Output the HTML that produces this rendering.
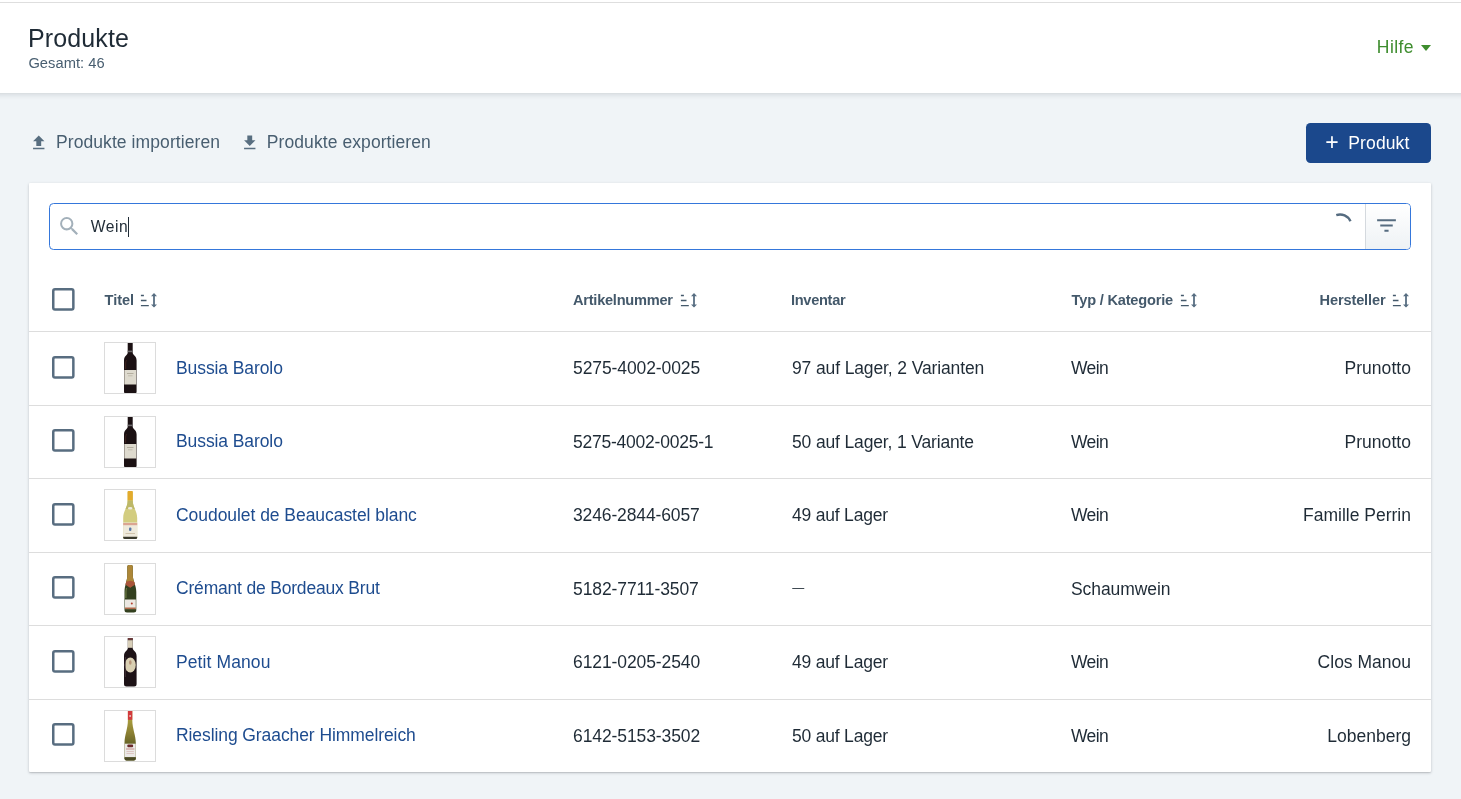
<!DOCTYPE html>
<html lang="de">
<head>
<meta charset="utf-8">
<title>Produkte</title>
<style>
*{box-sizing:border-box;margin:0;padding:0}
html,body{width:1461px;height:799px;overflow:hidden}
body{background:#f0f4f7;font-family:"Liberation Sans",Arial,sans-serif;color:#1f2b36;position:relative}
#wrap{position:absolute;left:0;top:0;width:1461px;height:799px;will-change:transform}
.abs{position:absolute;white-space:nowrap}
.topbar{position:absolute;left:-20px;top:0;width:1501px;height:93px;background:#fff;box-shadow:0 1px 6px rgba(20,30,40,.17)}
.topline{position:absolute;left:0;top:2px;width:1461px;height:1px;background:#dedede}
h1{position:absolute;left:28px;top:23px;font-size:25px;line-height:30px;font-weight:400;color:#1f2b36;white-space:nowrap;letter-spacing:.12px}
.total{position:absolute;left:28.400px;top:55px;font-size:14.700px;line-height:17px;color:#485e70;white-space:nowrap;letter-spacing:.05px}
.help{position:absolute;left:1376.800px;top:37px;font-size:17.5px;line-height:20px;color:#3e8d2e;white-space:nowrap;letter-spacing:.45px}
.caret{position:absolute;left:1421px;top:45px;width:0;height:0;border-left:5px solid transparent;border-right:5px solid transparent;border-top:6px solid #3e8d2e}
.tool{position:absolute;top:132px;font-size:17.5px;line-height:20px;color:#485e70;white-space:nowrap;letter-spacing:.08px}
.btn{position:absolute;left:1306px;top:123px;width:125px;height:40px;border-radius:4.500px;background:#1b488c;color:#fff;font-size:17.5px;line-height:40px;white-space:nowrap}
.card{position:absolute;left:29px;top:183px;width:1402px;height:589px;background:#fff;border-radius:1px;box-shadow:0 1px 3px rgba(10,20,30,.22),0 1px 1px rgba(10,20,30,.08)}
.search{position:absolute;left:20px;top:20px;width:1362px;height:47px;border:1px solid #3577db;border-radius:4.500px;background:#fff;overflow:hidden}
.search .q{position:absolute;left:40.700px;top:13px;font-size:15.600px;line-height:20px;color:#1f2b36;letter-spacing:.55px}
.search .cur{position:absolute;left:78px;top:13px;width:1px;height:20px;background:#1f2b36}
.search .fbtn{position:absolute;right:0;top:0;width:45px;height:45px;border-left:1px solid #d4d9de;background:linear-gradient(#fff,#eef2f5)}
.th{position:absolute;top:107px;font-size:14.6px;line-height:20px;font-weight:700;color:#44596b;white-space:nowrap}
.si{position:absolute;top:109px}
.row{position:absolute;left:0;width:1402px;height:74px;border-top:1px solid #dddddd}
.cb{position:absolute;left:23.300px;top:24.200px}
.ev .cb{top:23.400px}
.thumb{position:absolute;left:75px;top:10px;width:52px;height:52px;border:1px solid #dcdcdc;background:#fff}
.thumb svg{position:absolute;left:0;top:0}
.c{position:absolute;font-size:17.5px;line-height:20px;white-space:nowrap;color:#1f2b36;top:26px}
.t{left:147px;color:#1e4c8f}
.ev .t{top:25px}
.a{left:544px}
.i{left:763px}
.k{left:1042px}
.h{right:20px}
.dash{font-size:12px;top:25px;left:763.200px}
</style>
</head>
<body>
<div id="wrap">
<div class="topbar"></div>
<div class="topline"></div>
<h1>Produkte</h1>
<div class="total">Gesamt: 46</div>
<div class="help">Hilfe</div>
<div class="caret"></div>

<div class="tool" style="left:56px">Produkte importieren</div>
<svg class="abs" style="left:28.700px;top:132.600px" width="19.500" height="19.500" viewBox="0 0 24 24"><path fill="#586e80" d="M9 16h6v-6h4l-7-7-7 7h4v6zm-4 2h14v2H5v-2z"/></svg>
<div class="tool" style="left:266.800px">Produkte exportieren</div>
<svg class="abs" style="left:240.200px;top:132.600px" width="19.500" height="19.500" viewBox="0 0 24 24"><path fill="#586e80" d="M19 9h-4V3H9v6H5l7 7 7-7zM5 18v2h14v-2H5z"/></svg>

<div class="btn"><span class="abs" style="left:19.200px;top:-1.500px;font-size:23px">+</span><span class="abs" style="left:42.300px;top:0;letter-spacing:.12px">Produkt</span></div>

<div class="card">
  <div class="search">
    <svg class="abs" style="left:7px;top:9.800px" width="24.600" height="24.600" viewBox="0 0 24 24"><path fill="#a3b0ba" d="M15.5 14h-.79l-.28-.27A6.471 6.471 0 0 0 16 9.500 6.500 6.500 0 1 0 9.500 16c1.610 0 3.090-.59 4.230-1.570l.27.280v.79l5 4.990L20.490 19l-4.990-5zm-6 0C7.010 14 5 11.990 5 9.500S7.010 5 9.500 5 14 7.010 14 9.500 11.990 14 9.500 14z"/></svg>
    <div class="q">Wein</div>
    <div class="cur"></div>
    <svg class="abs" style="left:1276.250px;top:8.100px" width="28" height="28" viewBox="0 0 28 28"><path d="M10.260 3.130A11.500 11.500 0 0 1 24.500 9.320" fill="none" stroke="#566c80" stroke-width="2.400"/></svg>
    <div class="fbtn"><svg class="abs" style="left:7.600px;top:9.200px" width="25" height="25" viewBox="0 0 24 24"><path fill="#566c80" d="M10 18h4v-2h-4v2zM3 6v2h18V6H3zm3 7h12v-2H6v2z"/></svg></div>
  </div>

  <svg class="cb" style="top:105px" width="23" height="23" viewBox="0 0 23 23"><rect x="1.250" y="1.250" width="20.100" height="20.300" rx="1.750" fill="#fff" stroke="#586d80" stroke-width="2.500"/></svg>
  <div class="th" style="left:75.600px;letter-spacing:-.05px">Titel</div>
  <div class="th" style="left:544px;letter-spacing:-.25px">Artikelnummer</div>
  <div class="th" style="left:762px;letter-spacing:-.3px">Inventar</div>
  <div class="th" style="left:1042.600px;letter-spacing:-.2px">Typ / Kategorie</div>
  <div class="th" style="left:1290.600px;letter-spacing:-.15px">Hersteller</div>
  <svg class="si" style="left:110px" width="20" height="20" viewBox="0 0 20 20"><g fill="none" stroke="#44596b" stroke-width="1.350"><path d="M1.900 3.450H4.900M1.900 8.500H7.500M1.900 13.600H9.800"/><path d="M15 2.500V14.200" stroke-width="1.800" stroke="#586e82"/><path d="M12 4.200L15 1.100L18 4.200Z M12 12.500L15 15.600L18 12.500Z" fill="#586e82" stroke="none"/></g></svg>
  <svg class="si" style="left:650px" width="20" height="20" viewBox="0 0 20 20"><g fill="none" stroke="#44596b" stroke-width="1.350"><path d="M1.900 3.450H4.900M1.900 8.500H7.500M1.900 13.600H9.800"/><path d="M15 2.500V14.200" stroke-width="1.800" stroke="#586e82"/><path d="M12 4.200L15 1.100L18 4.200Z M12 12.500L15 15.600L18 12.500Z" fill="#586e82" stroke="none"/></g></svg>
  <svg class="si" style="left:1150px" width="20" height="20" viewBox="0 0 20 20"><g fill="none" stroke="#44596b" stroke-width="1.350"><path d="M1.900 3.450H4.900M1.900 8.500H7.500M1.900 13.600H9.800"/><path d="M15 2.500V14.200" stroke-width="1.800" stroke="#586e82"/><path d="M12 4.200L15 1.100L18 4.200Z M12 12.500L15 15.600L18 12.500Z" fill="#586e82" stroke="none"/></g></svg>
  <svg class="si" style="left:1362px" width="20" height="20" viewBox="0 0 20 20"><g fill="none" stroke="#44596b" stroke-width="1.350"><path d="M1.900 3.450H4.900M1.900 8.500H7.500M1.900 13.600H9.800"/><path d="M15 2.500V14.200" stroke-width="1.800" stroke="#586e82"/><path d="M12 4.200L15 1.100L18 4.200Z M12 12.500L15 15.600L18 12.500Z" fill="#586e82" stroke="none"/></g></svg>

  <div class="row" style="top:148px"><svg class="cb" width="23" height="23" viewBox="0 0 23 23"><rect x="1.250" y="1.250" width="20.100" height="20.300" rx="1.750" fill="#fff" stroke="#586d80" stroke-width="2.500"/></svg><div class="thumb"><svg width="50" height="50" viewBox="0 0 50 50"><path d="M22.700 0H27.700V9.500C27.700 12.500 31.600 12.500 31.600 17.500V48.500Q31.600 50.500 29.600 50.500H21Q19 50.500 19 48.500V17.500C19 12.500 22.700 12.500 22.700 9.500Z" fill="#1b1113"/><rect x="22.700" y="7.600" width="5" height="1.600" fill="#6d6a6c"/><path d="M21 17C20.200 18.500 20 20 20 22V26H21.200V21C21.200 19 21.500 18 22 17Z" fill="#4a2a22" opacity=".7"/><rect x="19.300" y="27" width="12" height="14.500" fill="#dedace"/><rect x="22" y="30" width="6.500" height=".8" fill="#a9a394"/><rect x="23" y="32.500" width="4.500" height=".7" fill="#b5af9f"/></svg></div><div class="c t" style="letter-spacing:-0.09px">Bussia Barolo</div><div class="c a" style="letter-spacing:-0.1px">5275-4002-0025</div><div class="c i" style="letter-spacing:-0.125px">97 auf Lager, 2 Varianten</div><div class="c k" style="letter-spacing:-0.6px">Wein</div><div class="c h" style="letter-spacing:0.05px">Prunotto</div></div>
  <div class="row ev" style="top:222px"><svg class="cb" width="23" height="23" viewBox="0 0 23 23"><rect x="1.250" y="1.250" width="20.100" height="20.300" rx="1.750" fill="#fff" stroke="#586d80" stroke-width="2.500"/></svg><div class="thumb"><svg width="50" height="50" viewBox="0 0 50 50"><path d="M22.700 0H27.700V9.500C27.700 12.500 31.600 12.500 31.600 17.500V48.500Q31.600 50.500 29.600 50.500H21Q19 50.500 19 48.500V17.500C19 12.500 22.700 12.500 22.700 9.500Z" fill="#1b1113"/><rect x="22.700" y="7.600" width="5" height="1.600" fill="#6d6a6c"/><path d="M21 17C20.200 18.500 20 20 20 22V26H21.200V21C21.200 19 21.500 18 22 17Z" fill="#4a2a22" opacity=".7"/><rect x="19.300" y="27" width="12" height="14.500" fill="#dedace"/><rect x="22" y="30" width="6.500" height=".8" fill="#a9a394"/><rect x="23" y="32.500" width="4.500" height=".7" fill="#b5af9f"/></svg></div><div class="c t" style="letter-spacing:-0.09px">Bussia Barolo</div><div class="c a" style="letter-spacing:-0.23px">5275-4002-0025-1</div><div class="c i" style="letter-spacing:-0.15px">50 auf Lager, 1 Variante</div><div class="c k" style="letter-spacing:-0.6px">Wein</div><div class="c h" style="letter-spacing:0.05px">Prunotto</div></div>
  <div class="row" style="top:295px"><svg class="cb" width="23" height="23" viewBox="0 0 23 23"><rect x="1.250" y="1.250" width="20.100" height="20.300" rx="1.750" fill="#fff" stroke="#586d80" stroke-width="2.500"/></svg><div class="thumb"><svg width="50" height="50" viewBox="0 0 50 50"><path d="M22.600 2Q22.600 1 23.600 1H26.800Q27.800 1 27.800 2V11C27.800 17 32.200 21 32.200 28V47.500Q32.200 49 30.700 49H19.700Q18.200 49 18.200 47.500V28C18.200 21 22.600 17 22.600 11Z" fill="#d3cd80"/><path d="M22.600 2Q22.600 1 23.600 1H26.800Q27.800 1 27.800 2V10.500H22.600Z" fill="#e3ab2c"/><path d="M22.600 10.500H27.800V11C27.800 14 28.800 16.500 29.800 19H20.600C21.600 16.500 22.600 14 22.600 11Z" fill="#bdb868"/><ellipse cx="25.200" cy="18.300" rx="2.300" ry="1.200" fill="#efece0"/><rect x="18.200" y="32.500" width="14" height="14.500" fill="#efeadc"/><rect x="18.200" y="33" width="14" height="2.200" fill="#dba592"/><rect x="24" y="37.500" width="2.400" height="3.600" rx="1" fill="#5b79a8"/><rect x="20.500" y="43" width="9.500" height=".8" fill="#c9b9a0"/><path d="M18.200 46.800H32.200V47.500Q32.200 49 30.700 49H19.700Q18.200 49 18.200 47.500Z" fill="#3b3a2e"/></svg></div><div class="c t" style="letter-spacing:-0.05px">Coudoulet de Beaucastel blanc</div><div class="c a" style="letter-spacing:-0.13px">3246-2844-6057</div><div class="c i" style="letter-spacing:-0.2px">49 auf Lager</div><div class="c k" style="letter-spacing:-0.6px">Wein</div><div class="c h">Famille Perrin</div></div>
  <div class="row ev" style="top:369px"><svg class="cb" width="23" height="23" viewBox="0 0 23 23"><rect x="1.250" y="1.250" width="20.100" height="20.300" rx="1.750" fill="#fff" stroke="#586d80" stroke-width="2.500"/></svg><div class="thumb"><svg width="50" height="50" viewBox="0 0 50 50"><path d="M22.300 2.500Q22.300 1 23.800 1H26.300Q27.800 1 27.800 2.500V11C27.800 17 31.300 21 31.300 28V46Q31.300 48.500 28.800 48.500H22Q19.500 48.500 19.500 46V28C19.500 21 22.300 17 22.300 11Z" fill="#33401f"/><path d="M22.300 2.500Q22.300 1 23.800 1H26.300Q27.800 1 27.800 2.500V11C27.800 14 28.700 17 29.600 19.500L25.200 23.500L20.800 19.500C21.600 17 22.300 14 22.300 11Z" fill="#ad8738"/><path d="M21.100 17.800L25.200 16.800L29.300 17.800L29.900 20.800L25.200 23.800L20.500 20.800Z" fill="#a9553a"/><path d="M21 24C20.500 26 20.300 28 20.300 30V34H21.500V29C21.500 27 21.700 25.500 22 24Z" fill="#6c7a45"/><rect x="20" y="35.500" width="10.800" height="9.600" fill="#ece8e2"/><circle cx="26.800" cy="39.500" r="1" fill="#b5402f"/><rect x="20" y="43.500" width="10.800" height="1.600" fill="#b06a4a"/></svg></div><div class="c t" style="letter-spacing:-0.19px">Crémant de Bordeaux Brut</div><div class="c a" style="letter-spacing:-0.1px">5182-7711-3507</div><div class="c i dash">—</div><div class="c k" style="letter-spacing:-0.08px">Schaumwein</div><div class="c h"></div></div>
  <div class="row" style="top:442px"><svg class="cb" width="23" height="23" viewBox="0 0 23 23"><rect x="1.250" y="1.250" width="20.100" height="20.300" rx="1.750" fill="#fff" stroke="#586d80" stroke-width="2.500"/></svg><div class="thumb"><svg width="50" height="50" viewBox="0 0 50 50"><path d="M22.800 1.500Q22.800 1 23.300 1H27.200Q27.700 1 27.700 1.500V11C27.700 14 31.600 14 31.600 19V47Q31.600 49.500 29.100 49.500H21.500Q19 49.500 19 47V19C19 14 22.800 14 22.800 11Z" fill="#1d1216"/><rect x="22.800" y="1" width="4.900" height="2.200" fill="#6b3b3b"/><rect x="22.800" y="3.200" width="4.900" height="7.600" fill="#d8cfb9"/><ellipse cx="25.300" cy="28" rx="5.500" ry="7.500" fill="#d9cfb2"/><ellipse cx="25.300" cy="25.500" rx="1.300" ry="2.200" fill="#b9957a"/><path d="M20.200 20C19.900 21.500 19.800 23 19.800 25V40H20.800V24C20.800 22.500 20.900 21 21.200 20Z" fill="#4a3a40" opacity=".8"/></svg></div><div class="c t" style="letter-spacing:0.1px">Petit Manou</div><div class="c a" style="letter-spacing:-0.1px">6121-0205-2540</div><div class="c i" style="letter-spacing:-0.2px">49 auf Lager</div><div class="c k" style="letter-spacing:-0.6px">Wein</div><div class="c h">Clos Manou</div></div>
  <div class="row ev" style="top:516px"><svg class="cb" width="23" height="23" viewBox="0 0 23 23"><rect x="1.250" y="1.250" width="20.100" height="20.300" rx="1.750" fill="#fff" stroke="#586d80" stroke-width="2.500"/></svg><div class="thumb"><svg width="50" height="50" viewBox="0 0 50 50"><linearGradient id="rg" x1="0" y1="0" x2="0" y2="1"><stop offset=".18" stop-color="#a89b3c"/><stop offset=".45" stop-color="#8a7f33"/><stop offset=".65" stop-color="#6a6628"/></linearGradient><path d="M22.900 0H27.300V9C27.300 18 30.800 24 30.800 32V47.500Q30.800 49.500 28.800 49.500H21.500Q19.500 49.500 19.500 47.500V32C19.500 24 22.900 18 22.900 9Z" fill="url(#rg)"/><path d="M22.900 0H27.300V8.800H22.900Z" fill="#d23a3c"/><rect x="24.500" y="4" width="1.200" height="2" fill="#f3d9d9"/><rect x="19.700" y="32.700" width="11" height="13.600" fill="#ebe9e6"/><rect x="22.300" y="33.600" width="5.800" height="2.600" rx="1" fill="#6b2a2a"/><rect x="21" y="37.500" width="8.400" height="1" fill="#c9908c"/><rect x="21.500" y="40" width="7.400" height=".7" fill="#d7b6b2"/><rect x="21.500" y="42" width="7.400" height=".7" fill="#d7b6b2"/><path d="M19.500 46.300H30.800V47.500Q30.800 49.500 28.800 49.500H21.500Q19.500 49.500 19.500 47.500Z" fill="#4a4a24"/></svg></div><div class="c t" style="letter-spacing:-0.085px">Riesling Graacher Himmelreich</div><div class="c a" style="letter-spacing:-0.1px">6142-5153-3502</div><div class="c i" style="letter-spacing:-0.2px">50 auf Lager</div><div class="c k" style="letter-spacing:-0.6px">Wein</div><div class="c h">Lobenberg</div></div>
</div>
</div>
</body>
</html>
